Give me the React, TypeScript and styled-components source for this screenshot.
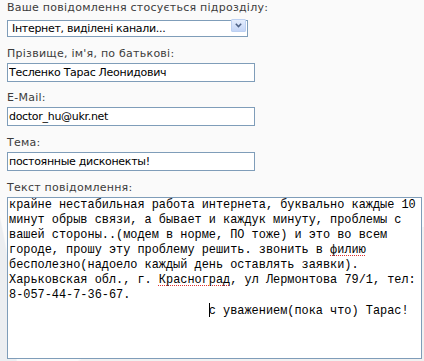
import React from "react";
import styled, { createGlobalStyle } from "styled-components";

const Global = createGlobalStyle`
  html, body { margin: 0; padding: 0; }
  body {
    width: 424px;
    height: 361px;
    overflow: hidden;
    background-color: #fafafa;
    background-image:
      radial-gradient(ellipse 620px 260px at 640px 470px, #f1f1f1 99.6%, rgba(241,241,241,0) 100%),
      radial-gradient(ellipse 60px 260px at -42px 400px, #eceef1 98%, rgba(236,238,241,0) 100%);
    background-repeat: no-repeat;
    font-family: "DejaVu Sans", Verdana, sans-serif;
  }
`;

const Form = styled.form`
  display: flex;
  flex-direction: column;
  padding: 0 0 0 7px;
`;

const Field = styled.div<{ $after: number }>`
  display: flex;
  flex-direction: column;
  align-items: flex-start;
  gap: 2px;
  margin-bottom: ${(p) => p.$after}px;
`;

const Label = styled.label`
  display: block;
  font-size: 11px;
  letter-spacing: 0.25px;
  line-height: 15px;
  height: 15px;
  color: #3c3c3c;
  white-space: nowrap;
`;

const SelectWrap = styled.div`
  position: relative;
  width: 241px;
  height: 17px;
`;

const Select = styled.select`
  appearance: none;
  -webkit-appearance: none;
  box-sizing: border-box;
  width: 100%;
  height: 100%;
  margin: 0;
  padding: 0 0 0 4px;
  border: 1px solid #7f9db9;
  border-radius: 0;
  background: #fff;
  font-family: "DejaVu Sans", Verdana, sans-serif;
  font-size: 11px;
  letter-spacing: -0.3px;
  line-height: 15px;
  color: #000;
  outline: none;
`;

const ArrowBox = styled.span`
  position: absolute;
  right: 2px;
  top: 2px;
  width: 15px;
  height: 13px;
  box-sizing: border-box;
  border: 1px solid #bcd0f1;
  border-radius: 1px;
  background: linear-gradient(#e4edfd, #c4d5f6);
  display: flex;
  align-items: center;
  justify-content: center;
  pointer-events: none;
`;

const TextInput = styled.input`
  box-sizing: border-box;
  width: 248px;
  height: 19px;
  margin: 0;
  padding: 0 1px;
  border: 1px solid #7f9db9;
  background: #fff;
  font-family: "DejaVu Sans", Verdana, sans-serif;
  font-size: 11px;
  letter-spacing: -0.3px;
  color: #000;
  outline: none;
`;

const MessageBox = styled.div`
  box-sizing: border-box;
  width: 415px;
  height: 162px;
  border: 1px solid #7f9db9;
  background: #fff;
  padding: 0 1px;
  font-family: "Liberation Mono", "Courier New", monospace;
  font-size: 11.9px;
  line-height: 15px;
  color: #000;
  white-space: pre;
  overflow: hidden;
`;

const Misspelled = styled.span`
  text-decoration: underline dotted #e03030;
  text-decoration-thickness: 1px;
  text-underline-offset: 2px;
  text-decoration-skip-ink: none;
`;

const Caret = styled.span`
  display: inline-block;
  width: 1px;
  height: 14px;
  margin-right: -1px;
  background: #000;
  vertical-align: -3px;
`;

export default function App() {
  return (
    <>
      <Global />
      <Form>
        <Field $after={12}>
          <Label>Ваше повідомлення стосується підрозділу:</Label>
          <SelectWrap>
            <Select defaultValue="inet">
              <option value="inet">Інтернет, виділені канали...</option>
            </Select>
            <ArrowBox>
              <svg width="7" height="5" viewBox="0 0 7 5">
                <path d="M0.8 0.8 L3.5 3.6 L6.2 0.8" fill="none" stroke="#4d6185" strokeWidth="1.5" />
              </svg>
            </ArrowBox>
          </SelectWrap>
        </Field>
        <Field $after={8}>
          <Label>Прізвище, ім'я, по батькові:</Label>
          <TextInput defaultValue="Тесленко Тарас Леонидович" />
        </Field>
        <Field $after={9}>
          <Label>E-Mail:</Label>
          <TextInput defaultValue="doctor_hu@ukr.net" />
        </Field>
        <Field $after={9}>
          <Label>Тема:</Label>
          <TextInput defaultValue="постоянные дисконекты!" />
        </Field>
        <Field $after={0}>
          <Label>Текст повідомлення:</Label>
          <MessageBox role="textbox" aria-multiline="true">
            {"крайне нестабильная работа интернета, буквально каждые 10\n"}
            {"минут обрыв связи, а бывает и каждук минуту, проблемы с\n"}
            {"вашей стороны..(модем в норме, ПО тоже) и это во всем\n"}
            {"городе, прошу эту проблему решить. звонить в "}
            <Misspelled>филию</Misspelled>
            {"\n"}
            {"бесполезно(надоело каждый день оставлять заявки).\n"}
            {"Харьковская обл., г. "}
            <Misspelled>Красноград</Misspelled>
            {", ул Лермонтова 79/1, тел:\n"}
            {"8-057-44-7-36-67.\n"}
            {"                            "}
            <Caret />
            {"с уважением(пока что) Тарас!"}
          </MessageBox>
        </Field>
      </Form>
    </>
  );
}
